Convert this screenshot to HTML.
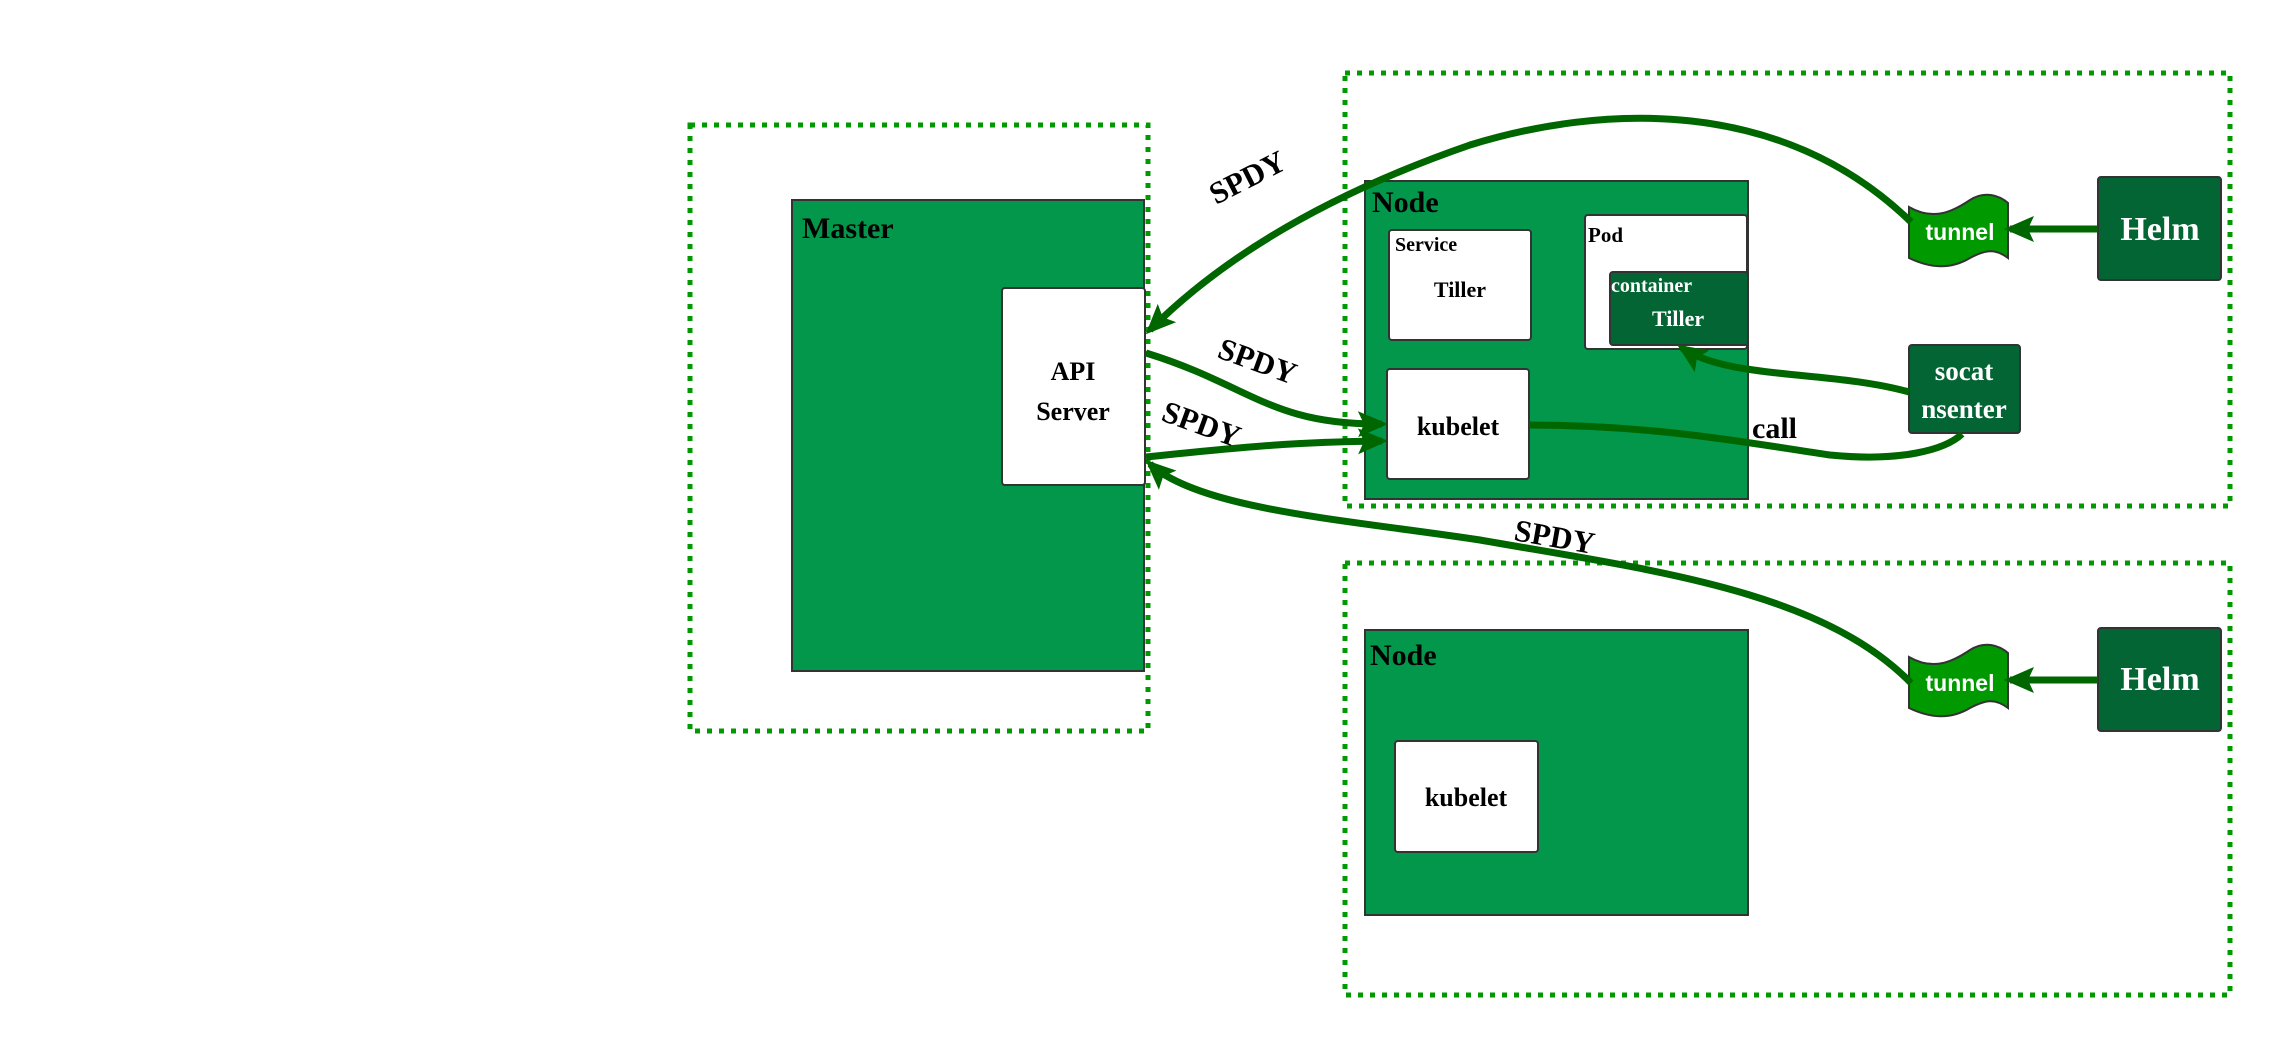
<!DOCTYPE html>
<html><head><meta charset="utf-8"><style>
html,body{margin:0;padding:0;background:#fff;}
svg{display:block}
text{font-family:"Liberation Serif",serif;font-weight:bold;}
</style></head><body>
<svg width="2291" height="1056" viewBox="0 0 2291 1056" xmlns="http://www.w3.org/2000/svg">
<defs>
<marker id="ah" markerWidth="30" markerHeight="26" refX="24" refY="13" orient="auto" markerUnits="userSpaceOnUse">
<path d="M0,0 L30,13 L0,26 L6,13 Z" fill="#006600"/></marker>
</defs>
<g fill="none" stroke="#009900" stroke-width="5" stroke-dasharray="5 7">
<rect x="690" y="125" width="458" height="606"/>
<rect x="1345" y="73" width="885" height="433"/>
<rect x="1345" y="563" width="885" height="432"/>
</g>
<rect x="792" y="200" width="352" height="471" fill="#02974b" stroke="#333" stroke-width="2"/>
<text x="802" y="238" font-size="30">Master</text>
<rect x="1002" y="288" width="143" height="197" rx="3" fill="#fff" stroke="#333" stroke-width="2"/>
<text x="1073" y="380" font-size="26" text-anchor="middle">API</text>
<text x="1073" y="420" font-size="26" text-anchor="middle">Server</text>
<rect x="1365" y="181" width="383" height="318" fill="#02974b" stroke="#333" stroke-width="2"/>
<text x="1372" y="212" font-size="30">Node</text>
<rect x="1389" y="230" width="142" height="110" rx="3" fill="#fff" stroke="#333" stroke-width="2"/>
<text x="1395" y="251" font-size="20">Service</text>
<text x="1460" y="297" font-size="22" text-anchor="middle">Tiller</text>
<rect x="1585" y="215" width="162" height="134" rx="3" fill="#fff" stroke="#333" stroke-width="2"/>
<text x="1588" y="242" font-size="21">Pod</text>
<rect x="1610" y="272" width="138" height="73" rx="3" fill="#026533" stroke="#333" stroke-width="2"/>
<text x="1611" y="292" font-size="20" fill="#fff">container</text>
<text x="1652" y="326" font-size="22" fill="#fff">Tiller</text>
<rect x="1387" y="369" width="142" height="110" rx="3" fill="#fff" stroke="#333" stroke-width="2"/>
<text x="1458" y="435" font-size="26" text-anchor="middle">kubelet</text>
<rect x="1365" y="630" width="383" height="285" fill="#02974b" stroke="#333" stroke-width="2"/>
<text x="1370" y="665" font-size="30">Node</text>
<rect x="1395" y="741" width="143" height="111" rx="3" fill="#fff" stroke="#333" stroke-width="2"/>
<text x="1466" y="806" font-size="26" text-anchor="middle">kubelet</text>
<g stroke="#333" stroke-width="2" fill="#009900">
<path d="M1909,207 C1935,222 1955,210 1970,200 C1985,190 2000,196 2008,203 L2008,258 C1995,248 1985,250 1970,258 C1950,270 1930,268 1909,258 Z"/>
<path d="M1909,657 C1935,672 1955,660 1970,650 C1985,640 2000,646 2008,653 L2008,708 C1995,698 1985,700 1970,708 C1950,720 1930,718 1909,708 Z"/>
</g>
<text x="1960" y="240" font-size="23" fill="#fff" text-anchor="middle" style="font-family:'Liberation Sans',sans-serif">tunnel</text>
<text x="1960" y="691" font-size="23" fill="#fff" text-anchor="middle" style="font-family:'Liberation Sans',sans-serif">tunnel</text>
<rect x="2098" y="177" width="123" height="103" rx="3" fill="#026533" stroke="#333" stroke-width="2"/>
<text x="2160" y="240" font-size="34" fill="#fff" text-anchor="middle">Helm</text>
<rect x="2098" y="628" width="123" height="103" rx="3" fill="#026533" stroke="#333" stroke-width="2"/>
<text x="2160" y="690" font-size="34" fill="#fff" text-anchor="middle">Helm</text>
<rect x="1909" y="345" width="111" height="88" rx="3" fill="#026533" stroke="#333" stroke-width="2"/>
<text x="1964" y="380" font-size="27" fill="#fff" text-anchor="middle">socat</text>
<text x="1964" y="418" font-size="27" fill="#fff" text-anchor="middle">nsenter</text>
<g fill="none" stroke="#006600" stroke-width="7" marker-end="url(#ah)">
<path d="M1911,222 C1780,95 1600,105 1470,145 C1340,190 1230,250 1150,330"/>
<path d="M1146,353 C1250,385 1270,425 1382,424"/>
<path d="M1146,457 C1250,446 1300,442 1382,441"/>
<path d="M1911,683 C1820,590 1650,570 1480,540 C1350,520 1200,510 1150,464"/>
<path d="M2098,229 L2010,229"/>
<path d="M2098,680 L2010,680"/>
<path d="M1909,392 C1830,370 1730,380 1682,348"/>
</g>
<path d="M1529,425 C1660,425 1760,445 1830,455 C1900,462 1945,450 1962,434" fill="none" stroke="#006600" stroke-width="7"/>
<text font-size="31" transform="translate(1216,205) rotate(-27)">SPDY</text>
<text font-size="31" transform="translate(1216,357) rotate(20)">SPDY</text>
<text font-size="31" transform="translate(1160,420) rotate(20)">SPDY</text>
<text font-size="31" transform="translate(1513,540) rotate(10)">SPDY</text>
<text x="1752" y="438" font-size="30">call</text>
</svg>
</body></html>
